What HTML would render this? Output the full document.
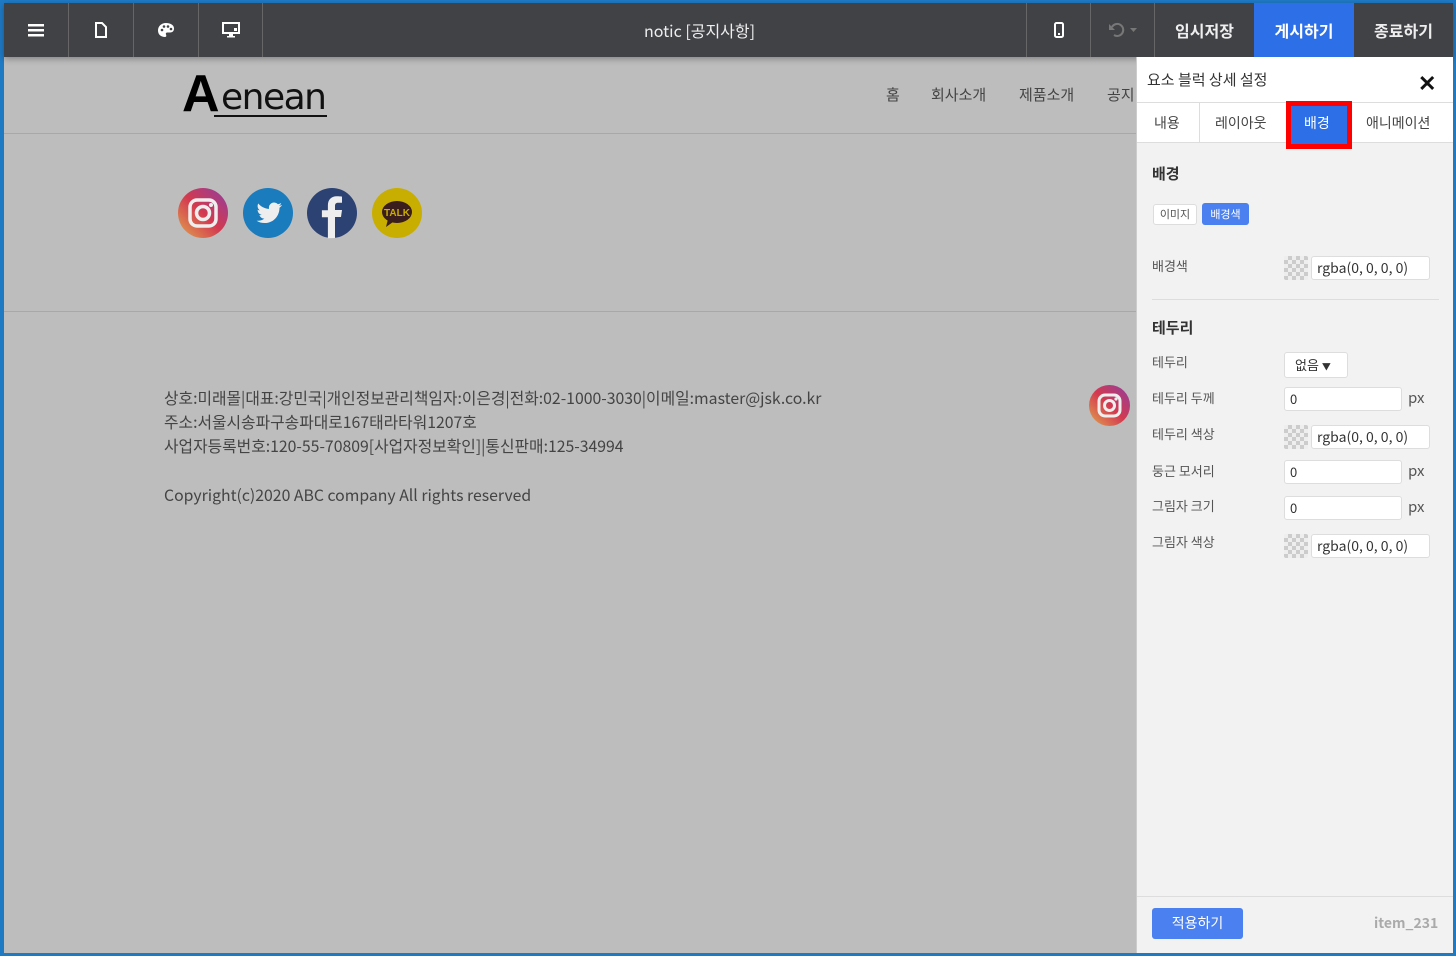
<!DOCTYPE html>
<html><head><meta charset="utf-8"><style>
*{box-sizing:border-box;margin:0;padding:0}
body{width:1456px;height:956px;overflow:hidden;background:#1f7ac4;font-family:"Liberation Sans","Noto Sans CJK KR",sans-serif;position:relative}
.a{position:absolute}
#main{left:4px;top:3px;width:1449px;height:950px;background:#bdbdbd;overflow:hidden}
#top{left:4px;top:3px;width:1449px;height:54px;background:#414246;color:#fff;box-shadow:0 2px 6px rgba(0,0,0,.3)}
.sep{position:absolute;top:0;width:1px;height:54px;background:#666}
.ic{position:absolute;top:0;height:54px;display:flex;align-items:center;justify-content:center}
.btn{position:absolute;top:0;height:54px;display:flex;align-items:center;justify-content:center;font-size:16px;font-weight:bold;color:#eee;font-family:"Noto Sans CJK KR",sans-serif}
.nav{font-size:15px;color:#444;top:84px;font-family:"Noto Sans CJK KR",sans-serif}
.ft{left:164px;font-size:15.8px;color:#444;line-height:24px;font-family:"Noto Sans CJK KR",sans-serif;white-space:nowrap}
#panel{left:1136px;top:57px;width:317px;height:896px;background:#f2f2f2;border-left:1px solid #ccc;font-family:"Noto Sans CJK KR",sans-serif}
.lb{position:absolute;left:15px;font-size:13px;color:#555;line-height:18px}
.inp{position:absolute;left:147px;width:118px;height:24px;background:#fff;border:1px solid #ddd;border-radius:3px;font-size:13px;padding:1px 5px;color:#333;line-height:20px}
.px{position:absolute;left:271px;font-size:15px;color:#555;line-height:20px}
.chk{position:absolute;left:147px;width:24px;height:24px;background:repeating-conic-gradient(#ccc 0 25%,#eee 0 50%) 0 0/8px 8px;border-radius:2px}
.cin{position:absolute;left:174px;width:119px;height:24px;background:#fff;border:1px solid #ddd;border-radius:3px;font-size:14px;padding:0 5px;color:#333;line-height:22px}
</style></head><body>
<div id="main" class="a">
 <div class="a" style="left:0;top:130px;width:1132px;height:1px;background:#a8a8a8"></div>
 <div class="a" style="left:0;top:308px;width:1132px;height:1px;background:#a8a8a8"></div>
</div>
<div class="a" style="left:182px;top:66px;font-size:52px;font-weight:bold;color:#000;line-height:56px">A</div>
<div class="a" style="left:221px;top:76px;font-size:36px;color:#111;line-height:44px;font-family:'DejaVu Sans',sans-serif;letter-spacing:-1.5px">enean</div>
<div class="a" style="left:214px;top:115px;width:113px;height:2px;background:#111"></div>
<div class="a nav" style="left:886px">홈</div>
<div class="a nav" style="left:931px">회사소개</div>
<div class="a nav" style="left:1019px">제품소개</div>
<div class="a nav" style="left:1107px">공지</div>
<svg class="a" style="left:178px;top:188px" width="246" height="51">
<defs><linearGradient id="ig" x1="0" y1="1" x2="1" y2="0"><stop offset="0" stop-color="#e0a54e"/><stop offset=".5" stop-color="#d3394f"/><stop offset="1" stop-color="#8e3fa0"/></linearGradient></defs>
<circle cx="25" cy="25" r="25" fill="url(#ig)"/>
<rect x="12" y="12" width="26" height="26" rx="7" fill="none" stroke="#eee" stroke-width="3.5"/><circle cx="25" cy="25" r="6.5" fill="none" stroke="#eee" stroke-width="3.5"/><circle cx="33" cy="17" r="2" fill="#eee"/>
<circle cx="90" cy="25" r="25" fill="#1a7bbd"/>
<path d="M104 17c-1 .5-2 .7-3 .8 1-.6 1.9-1.6 2.2-2.8-1 .6-2 1-3.300 1.2a5.2 5.2 0 0 0-8.900 4.700c-4.300-.2-8.200-2.300-10.700-5.400-1.400 2.400-.6 5.400 1.600 6.900-.8 0-1.600-.2-2.300-.6 0 2.500 1.800 4.700 4.200 5.100-.8.2-1.600.3-2.400.1.700 2.100 2.600 3.600 4.900 3.600a10.500 10.500 0 0 1-7.700 2.100c2.300 1.500 5.100 2.300 8 2.300 9.700 0 15-8.100 14.900-15.300 1-.7 1.900-1.600 2.600-2.600z" fill="#eee"/>
<circle cx="154" cy="25" r="25" fill="#2b4272"/>
<path d="M157 50V29h6l1-7h-7v-4c0-2 .6-3.3 3.4-3.3h3.6V8.6c-.6-.1-2.8-.3-5.3-.3-5.2 0-8.8 3.2-8.8 9v5h-6v7h6v21z" fill="#eee"/>
<circle cx="219" cy="25" r="25" fill="#c8ae00"/>
<ellipse cx="219" cy="24" rx="15" ry="11" fill="#3a1d1d"/><path d="M210 31l-2 8 7-5z" fill="#3a1d1d"/>
<text x="219" y="28" font-size="10" font-weight="bold" fill="#c8ae00" text-anchor="middle" font-family="Liberation Sans">TALK</text>
</svg>
<div class="a ft" style="top:386px">상호:미래몰|대표:강민국|개인정보관리책임자:이은경|전화:02-1000-3030|이메일:master@jsk.co.kr<br>주소:서울시송파구송파대로167태라타워1207호<br>사업자등록번호:120-55-70809[사업자정보확인]|통신판매:125-34994</div>
<div class="a ft" style="top:483px">Copyright(c)2020 ABC company All rights reserved</div>
<svg class="a" style="left:1089px;top:385px" width="41" height="41"><circle cx="20.5" cy="20.5" r="20.5" fill="url(#ig)"/><rect x="10" y="10" width="21" height="21" rx="6" fill="none" stroke="#eee" stroke-width="3"/><circle cx="20.5" cy="20.5" r="5" fill="none" stroke="#eee" stroke-width="3"/><circle cx="27" cy="14" r="1.6" fill="#eee"/></svg>

<div id="top" class="a">
 <div class="ic" style="left:0;width:64px"><svg width="16" height="14"><rect y="1" width="16" height="2.5" fill="#fff"/><rect y="6" width="16" height="2.5" fill="#fff"/><rect y="11" width="16" height="2.5" fill="#fff"/></svg></div>
 <div class="sep" style="left:64px"></div>
 <div class="ic" style="left:65px;width:64px"><svg width="12" height="16"><path d="M1 1h6l4 4v10H1z" fill="none" stroke="#fff" stroke-width="2"/></svg></div>
 <div class="sep" style="left:129px"></div>
 <div class="ic" style="left:130px;width:64px"><svg width="18" height="16"><path d="M9 1C4 1 1 4.5 1 8.5S4 15 8 15c1.5 0 1.5-1.5 1-2.5s0-2 1.5-2H13c3 0 4-2 4-4C17 3 13.5 1 9 1z" fill="#fff"/><circle cx="5" cy="8" r="1.3" fill="#414246"/><circle cx="7" cy="4.5" r="1.3" fill="#414246"/><circle cx="11" cy="4.5" r="1.3" fill="#414246"/><circle cx="14" cy="7" r="1.3" fill="#414246"/></svg></div>
 <div class="sep" style="left:194px"></div>
 <div class="ic" style="left:195px;width:64px"><svg width="18" height="16"><rect x="1" y="1" width="16" height="10" fill="none" stroke="#fff" stroke-width="2"/><rect x="7" y="12" width="4" height="2" fill="#fff"/><rect x="5" y="14" width="8" height="1.5" fill="#fff"/><rect x="12" y="6" width="3" height="3" fill="#fff"/></svg></div>
 <div class="sep" style="left:258px"></div>
 <div class="a" style="left:640px;top:17px;font-size:16px;color:#eee;font-family:'Noto Sans CJK KR',sans-serif;line-height:20px">notic [공지사항]</div>
 <div class="sep" style="left:1022px"></div>
 <div class="ic" style="left:1023px;width:63px"><svg width="10" height="16"><rect x="1" y="1" width="8" height="14" rx="1.5" fill="none" stroke="#fff" stroke-width="2"/><rect x="4" y="11" width="2" height="2" fill="#fff"/></svg></div>
 <div class="sep" style="left:1086px"></div>
 <div class="ic" style="left:1087px;width:63px"><svg width="30" height="16"><path d="M4 5a6 6 0 1 1 2 8" fill="none" stroke="#777" stroke-width="2"/><path d="M1 2v6h6z" fill="#777"/><path d="M22 6h7l-3.5 4z" fill="#777"/></svg></div>
 <div class="sep" style="left:1150px"></div>
 <div class="btn" style="left:1151px;width:99px">임시저장</div>
 <div class="btn" style="left:1250px;width:100px;background:#2c6fe6;color:#fff">게시하기</div>
 <div class="btn" style="left:1350px;width:99px">종료하기</div>
</div>

<div id="panel" class="a">
 <div class="a" style="left:0;top:0;width:316px;height:46px;background:#fff;border-bottom:1px solid #ddd"></div>
 <div class="a" style="left:10px;top:12px;font-size:15px;color:#333">요소 블럭 상세 설정</div>
 <div class="a" style="left:281px;top:9px;font-size:22px;font-weight:bold;color:#111">✕</div>
 <div class="a" style="left:0;top:46px;width:316px;height:40px;background:#fff;border-bottom:1px solid #ddd"></div>
 <div class="a" style="left:62px;top:46px;width:1px;height:40px;background:#ddd"></div>
 <div class="a" style="left:17px;top:56px;font-size:14px;color:#444">내용</div>
 <div class="a" style="left:78px;top:56px;font-size:14px;color:#444">레이아웃</div>
 <div class="a" style="left:149px;top:44px;width:66px;height:48px;border:5px solid #f00;background:#2c6fe6"></div>
 <div class="a" style="left:167px;top:56px;font-size:14px;color:#fff">배경</div>
 <div class="a" style="left:229px;top:56px;font-size:14px;color:#444">애니메이션</div>
 <div class="a" style="left:15px;top:106px;font-size:15px;font-weight:bold;color:#333">배경</div>
 <div class="a" style="left:16px;top:147px;width:44px;height:21px;background:#fff;border:1px solid #ddd;border-radius:3px;font-size:11px;color:#555;text-align:center;line-height:19px">이미지</div>
 <div class="a" style="left:65px;top:146px;width:47px;height:22px;background:#4a80ef;border-radius:3px;font-size:11px;color:#fff;text-align:center;line-height:22px">배경색</div>
 <div class="lb" style="top:200px">배경색</div>
 <div class="chk" style="top:199px"></div><div class="cin" style="top:199px">rgba(0, 0, 0, 0)</div>
 <div class="a" style="left:15px;top:242px;width:287px;height:1px;background:#ddd"></div>
 <div class="a" style="left:15px;top:260px;font-size:15px;font-weight:bold;color:#333">테두리</div>
 <div class="lb" style="top:296px">테두리</div>
 <div class="a" style="left:147px;top:295px;width:64px;height:26px;background:#fff;border:1px solid #ddd;border-radius:3px;font-size:13px;color:#333;padding:2px 10px;line-height:20px">없음 <span style="font-size:9px">▼</span></div>
 <div class="lb" style="top:332px">테두리 두께</div><div class="inp" style="top:330px">0</div><div class="px" style="top:331px">px</div>
 <div class="lb" style="top:368px">테두리 색상</div><div class="chk" style="top:368px"></div><div class="cin" style="top:368px">rgba(0, 0, 0, 0)</div>
 <div class="lb" style="top:405px">둥근 모서리</div><div class="inp" style="top:403px">0</div><div class="px" style="top:404px">px</div>
 <div class="lb" style="top:440px">그림자 크기</div><div class="inp" style="top:439px">0</div><div class="px" style="top:440px">px</div>
 <div class="lb" style="top:476px">그림자 색상</div><div class="chk" style="top:477px"></div><div class="cin" style="top:477px">rgba(0, 0, 0, 0)</div>
 <div class="a" style="left:0;top:839px;width:316px;height:1px;background:#ddd"></div>
 <div class="a" style="left:15px;top:851px;width:91px;height:31px;background:#4a80ef;border-radius:3px;color:#fff;font-size:14px;text-align:center;line-height:31px">적용하기</div>
 <div class="a" style="left:237px;top:856px;font-size:14px;font-weight:bold;color:#aaa">item_231</div>
</div>
</body></html>
